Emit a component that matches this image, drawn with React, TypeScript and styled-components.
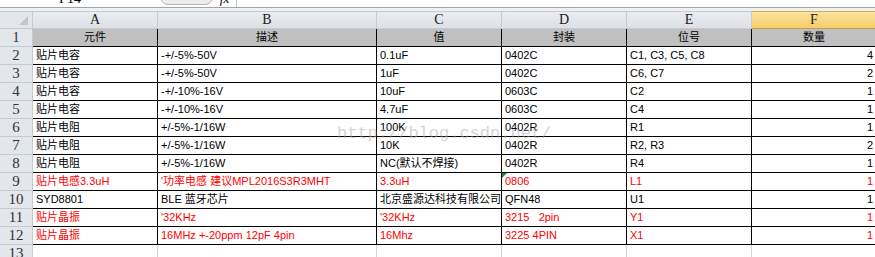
import React from "react";
import styled, { createGlobalStyle } from "styled-components";

const GlobalStyle = createGlobalStyle`
  html, body { margin: 0; padding: 0; background: #fff; overflow: hidden; }
  body { font-family: "Liberation Sans", "Noto Sans CJK SC", sans-serif; }
`;

const Page = styled.div`
  width: 875px;
  height: 257px;
  overflow: hidden;
  position: relative;
`;

// 数式バー（上端だけ見えている）
const FormulaBar = styled.div`
  display: flex;
  align-items: flex-end;
  height: 7px;
  overflow: hidden;
  background: #fff;
  border-bottom: 1px solid #a3a3a3;
`;

const NameBox = styled.div`
  width: 140px;
  display: flex;
  justify-content: center;
  font-family: "Liberation Serif", serif;
  font-size: 14px;
  line-height: 14px;
  margin-bottom: 1px;
  color: #000;
`;

const Pill = styled.div`
  width: 53px;
  height: 16px;
  margin-left: 20px;
  margin-bottom: 2px;
  flex-shrink: 0;
  border-radius: 8px;
  border: 1px solid #b4b4b4;
  background: #ececec;
  box-sizing: border-box;
`;

const Fx = styled.div`
  width: 23px;
  text-align: center;
  font-family: "Liberation Serif", serif;
  font-style: italic;
  font-size: 13px;
  line-height: 13px;
  margin-bottom: 2px;
`;

const FormulaInput = styled.div`
  flex: 1;
  align-self: stretch;
  border-left: 1px solid #c3c3c3;
`;

const Band = styled.div`
  height: 3px;
  background: #eef0f3;
`;

const Sheet = styled.table`
  border-collapse: separate;
  border-spacing: 0;
  table-layout: fixed;
  width: 877px;
`;

const Corner = styled.th`
  height: 16px;
  padding: 0;
  background: #e3e6eb;
  border-right: 1px solid #c5c9d0;
  border-bottom: 1px solid #c5c9d0;
  border-top: 1px solid #c8ccd2;
  position: relative;
  &::after {
    content: "";
    position: absolute;
    right: 4px;
    bottom: 3px;
    border-style: solid;
    border-width: 0 0 9px 9px;
    border-color: transparent transparent #c3c7cd transparent;
  }
`;

const ColHead = styled.th<{ $active?: boolean }>`
  height: 16px;
  padding: 0;
  border-top: 1px solid ${(p) => (p.$active ? "#d8a94c" : "#c8ccd2")};
  border-right: 1px solid ${(p) => (p.$active ? "#c59d4f" : "#c5c9d0")};
  border-bottom: 1px solid ${(p) => (p.$active ? "#c59d4f" : "#c5c9d0")};
  background: ${(p) =>
    p.$active
      ? "linear-gradient(#fbe39e, #f6cd6a)"
      : "linear-gradient(#e9ecf0, #dde1e6)"};
  font-family: "Liberation Serif", serif;
  font-weight: normal;
  font-size: 14px;
  line-height: 16px;
  color: #222;
  text-align: center;
`;

const RowHead = styled.th`
  height: 17px;
  padding: 0;
  background: #e3e6eb;
  border-right: 1px solid #c5c9d0;
  border-bottom: 1px solid #c5c9d0;
  font-family: "Liberation Serif", serif;
  font-weight: normal;
  font-size: 15px;
  line-height: 17px;
  color: #333;
  text-align: center;
`;

const Cell = styled.td<{
  $align?: "left" | "center" | "right";
  $red?: boolean;
  $head?: boolean;
  $flag?: boolean;
}>`
  height: 17px;
  padding: 0 3px;
  border-right: 1px solid #000;
  border-bottom: 1px solid #000;
  background: ${(p) => (p.$head ? "#c0c0c0" : "#fff")};
  color: ${(p) => (p.$red ? "#ff0000" : "#000")};
  text-align: ${(p) => p.$align || "left"};
  font-size: 11px;
  line-height: 17px;
  white-space: nowrap;
  overflow: hidden;
  position: relative;
  &::before {
    content: "";
    display: ${(p) => (p.$flag ? "block" : "none")};
    position: absolute;
    left: 0;
    top: 0;
    border-style: solid;
    border-width: 5px 5px 0 0;
    border-color: #1f8a3a transparent transparent transparent;
  }
`;

const EmptyCell = styled.td`
  height: 17px;
  padding: 0;
  border-right: 1px solid #d4d4d4;
`;

const Watermark = styled.div`
  position: absolute;
  left: 337px;
  top: 124px;
  font-family: "Liberation Mono", monospace;
  font-size: 17px;
  color: rgba(170, 170, 170, 0.5);
  pointer-events: none;
  white-space: nowrap;
`;

type Row = { cells: string[]; red?: boolean; flagD?: boolean };

const header = ["元件", "描述", "值", "封装", "位号", "数量"];

const rows: Row[] = [
  { cells: ["贴片电容", "-+/-5%-50V", "0.1uF", "0402C", "C1, C3, C5, C8", "4"] },
  { cells: ["贴片电容", "-+/-5%-50V", "1uF", "0402C", "C6, C7", "2"] },
  { cells: ["贴片电容", "-+/-10%-16V", "10uF", "0603C", "C2", "1"] },
  { cells: ["贴片电容", "-+/-10%-16V", "4.7uF", "0603C", "C4", "1"] },
  { cells: ["贴片电阻", "+/-5%-1/16W", "100K", "0402R", "R1", "1"] },
  { cells: ["贴片电阻", "+/-5%-1/16W", "10K", "0402R", "R2, R3", "2"] },
  { cells: ["贴片电阻", "+/-5%-1/16W", "NC(默认不焊接)", "0402R", "R4", "1"] },
  {
    cells: ["贴片电感3.3uH", "'功率电感 建议MPL2016S3R3MHT", "3.3uH", "0806", "L1", "1"],
    red: true,
    flagD: true,
  },
  { cells: ["SYD8801", "BLE 蓝牙芯片", "北京盛源达科技有限公司", "QFN48", "U1", "1"] },
  { cells: ["贴片晶振", "'32KHz", "'32KHz", "3215\u00a0\u00a0\u00a02pin", "Y1", "1"], red: true },
  { cells: ["贴片晶振", "16MHz +-20ppm 12pF 4pin", "16Mhz", "3225 4PIN", "X1", "1"], red: true },
];

const widths = [33, 125, 219, 125, 125, 125, 125];
const letters = ["A", "B", "C", "D", "E", "F"];

const App = () => {
  const page = (
    <Page>
      <GlobalStyle />
      <FormulaBar>
        <NameBox>F14</NameBox>
        <Pill />
        <Fx>fx</Fx>
        <FormulaInput />
      </FormulaBar>
      <Band />
      <Sheet>
        <colgroup>
          {widths.map((w, i) => (
            <col key={i} style={{ width: w }} />
          ))}
        </colgroup>
        <tbody>
          <tr>
            <Corner />
            {letters.map((l) => (
              <ColHead key={l} $active={l === "F"}>
                {l}
              </ColHead>
            ))}
          </tr>
          <tr>
            <RowHead>1</RowHead>
            {header.map((h) => (
              <Cell key={h} $head $align="center">
                {h}
              </Cell>
            ))}
          </tr>
          {rows.map((r, i) => (
            <tr key={i}>
              <RowHead>{i + 2}</RowHead>
              {r.cells.map((c, j) => (
                <Cell
                  key={j}
                  $red={r.red}
                  $align={j === 5 ? "right" : "left"}
                  $flag={j === 3 && r.flagD}
                >
                  {c}
                </Cell>
              ))}
            </tr>
          ))}
          <tr>
            <RowHead>13</RowHead>
            {letters.map((l) => (
              <EmptyCell key={l} />
            ))}
          </tr>
        </tbody>
      </Sheet>
      <Watermark>http://blog.csdn.net/</Watermark>
    </Page>
  );

  return page;
};

export default App;
